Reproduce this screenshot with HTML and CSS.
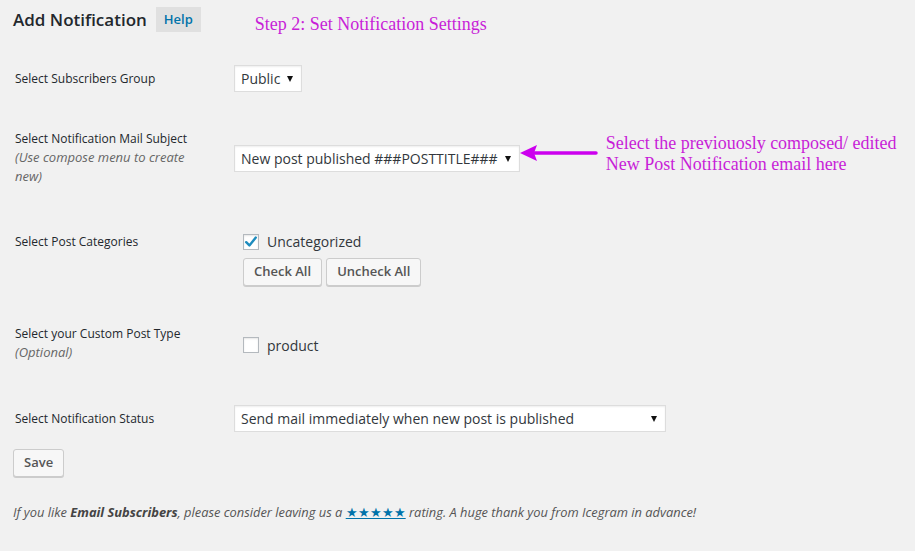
FILE: index.html
```html
<!DOCTYPE html>
<html>
<head>
<meta charset="utf-8">
<link rel="stylesheet" href="styles.css">
</head>
<body>
<div class="wrap">
  <div class="header">
    <h2 class="title">Add Notification</h2>
    <span class="help-btn">Help</span>
    <span class="step-note">Step 2: Set Notification Settings</span>
  </div>

  <div class="row row-group">
    <div class="label">Select Subscribers Group</div>
    <div class="field">
      <div class="select select-public"><span class="select-text">Public</span><span class="caret"></span></div>
    </div>
  </div>

  <div class="row row-subject">
    <div class="label">Select Notification Mail Subject<br><span class="hint">(Use compose menu to create new)</span></div>
    <div class="field field-subject">
      <div class="select select-subject"><span class="select-text">New post published ###POSTTITLE###</span><span class="caret"></span></div>
      <svg class="arrow" width="78" height="20" viewBox="0 0 78 20">
        <line x1="12" y1="10" x2="76" y2="10" stroke="#cc00ee" stroke-width="3.5" stroke-linecap="round"/>
        <polygon points="0,10 17,2 14,10 17,18" fill="#cc00ee"/>
      </svg>
      <div class="side-note">Select the previouosly composed/ edited<br>New Post Notification email here</div>
    </div>
  </div>

  <div class="row row-cats">
    <div class="label">Select Post Categories</div>
    <div class="field field-cats">
      <label class="check-line"><span class="checkbox checked"><svg width="14" height="14" viewBox="0 0 14 14"><path d="M2.2 7.2 L5.4 10.4 L11.8 2.6" fill="none" stroke="#1e8cbe" stroke-width="2.4" stroke-linecap="round" stroke-linejoin="round"/></svg></span><span>Uncategorized</span></label>
      <div class="btn-line">
        <span class="button">Check All</span>
        <span class="button">Uncheck All</span>
      </div>
    </div>
  </div>

  <div class="row row-cpt">
    <div class="label">Select your Custom Post Type<br><span class="hint">(Optional)</span></div>
    <div class="field field-cpt">
      <label class="check-line"><span class="checkbox"></span><span>product</span></label>
    </div>
  </div>

  <div class="row row-status">
    <div class="label">Select Notification Status</div>
    <div class="field">
      <div class="select select-status"><span class="select-text">Send mail immediately when new post is published</span><span class="caret"></span></div>
    </div>
  </div>

  <div class="save-line"><span class="button">Save</span></div>

  <p class="footer">If you like <strong>Email Subscribers</strong>, please consider leaving us a <a class="stars" href="#">★★★★★</a> rating. A huge thank you from Icegram in advance!</p>
</div>
</body>
</html>
```

FILE: styles.css
```css
html, body {
  margin: 0;
  padding: 0;
  background: #f1f1f1;
}
body {
  font-family: "Open Sans", "Noto Sans", sans-serif;
  font-size: 13px;
  color: #23282d;
  width: 915px;
  height: 551px;
  overflow: hidden;
}
.wrap {
  padding: 0 0 0 13px;
}
.header {
  display: flex;
  align-items: center;
  height: 40px;
}
.title {
  margin: 0;
  font-size: 17px;
  font-weight: 600;
  color: #23282d;
  line-height: 40px;
}
.help-btn {
  margin-left: 9px;
  margin-top: -2px;
  background: #e0e0e0;
  color: #0073aa;
  font-weight: 600;
  font-size: 13px;
  padding: 0 8px;
  height: 25px;
  line-height: 25px;
}
.step-note {
  margin-left: 54px;
  margin-top: 8px;
  font-family: "Liberation Serif", "Times New Roman", serif;
  font-size: 18px;
  color: #c81ed8;
}
.row {
  display: flex;
  align-items: center;
  padding-left: 2px;
}
.label {
  width: 219px;
  flex: none;
  font-size: 12px;
  line-height: 19px;
  color: #23282d;
}
.hint {
  font-style: italic;
  font-size: 13px;
  color: #666;
}
.row-subject .label {
  width: 190px;
  margin-right: 29px;
}
.field {
  display: flex;
  align-items: center;
}
.row-group { margin-top: 25px; }
.row-subject { margin-top: 37px; }
.row-subject .field { margin-top: 2px; }
.row-cats { margin-top: 47px; align-items: flex-start; }
.row-cats .label { margin-top: -1px; }
.row-cats .field { margin-top: -1px; }
.row-cpt { margin-top: 38px; }
.row-status { margin-top: 43px; }

.select {
  display: flex;
  align-items: center;
  height: 25px;
  background: #fff;
  border: 1px solid #ddd;
  box-shadow: inset 0 1px 2px rgba(0,0,0,0.07);
  font-size: 14px;
  color: #32373c;
  padding: 0 8px 0 6px;
  box-sizing: content-box;
}
.select-text { flex: 1; white-space: nowrap; }
.caret {
  width: 0;
  height: 0;
  border-left: 3.5px solid transparent;
  border-right: 3.5px solid transparent;
  border-top: 6px solid #111;
  margin-left: 7px;
  margin-top: 1px;
}
.select-status { width: 416px; }

.arrow {
  margin-left: 0;
  margin-top: -12px;
  flex: none;
}
.side-note {
  margin-left: 8px;
  margin-top: -10px;
  font-family: "Liberation Serif", "Times New Roman", serif;
  font-size: 18px;
  line-height: 21px;
  color: #c81ed8;
  white-space: nowrap;
}

.field-cats, .field-cpt {
  flex-direction: column;
  align-items: flex-start;
  padding-left: 9px;
}
.check-line {
  display: flex;
  align-items: center;
  font-size: 14px;
  color: #32373c;
  height: 19px;
}
.checkbox {
  width: 14px;
  height: 14px;
  border: 1px solid #b4b9be;
  background: #fff;
  box-shadow: inset 0 1px 2px rgba(0,0,0,0.1);
  margin-right: 8px;
  display: flex;
  align-items: center;
  justify-content: center;
  flex: none;
}
.btn-line {
  display: flex;
  gap: 4px;
  margin-top: 7px;
}
.button {
  display: inline-block;
  height: 26px;
  line-height: 25px;
  padding: 0 10px;
  background: #f7f7f7;
  border: 1px solid #ccc;
  border-radius: 3px;
  box-shadow: 0 1px 0 #ccc;
  color: #555;
  font-size: 13px;
  font-weight: 600;
  box-sizing: content-box;
}
.field-cpt { margin-top: 4px; }

.save-line {
  margin-top: 17px;
}
.footer {
  margin: 26px 0 0 0;
  font-style: italic;
  font-size: 12.87px;
  color: #555;
}
.footer strong {
  font-weight: 700;
  color: #444;
}
.stars {
  color: #0073aa;
  text-decoration: underline;
  font-style: normal;
}
```
